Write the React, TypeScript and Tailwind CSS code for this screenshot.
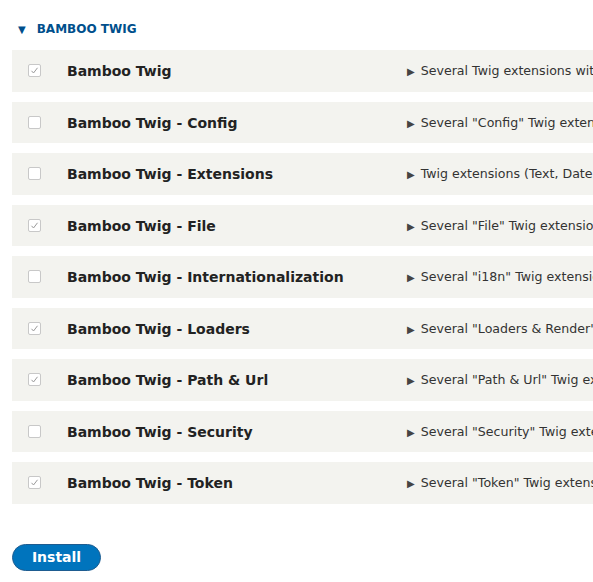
import type React from "react"

interface Module {
  name: string
  description: string
  checked: boolean
}

const modules: Module[] = [
  { name: "Bamboo Twig", description: "Several Twig extensions with a strong focus on performance.", checked: true },
  { name: "Bamboo Twig - Config", description: "Several \"Config\" Twig extensions, like config values & settings.", checked: false },
  { name: "Bamboo Twig - Extensions", description: "Twig extensions (Text, Date, Array, Intl) of the Twig project.", checked: false },
  { name: "Bamboo Twig - File", description: "Several \"File\" Twig extensions, like url & extension of files.", checked: true },
  { name: "Bamboo Twig - Internationalization", description: "Several \"i18n\" Twig extensions, like date & price format.", checked: false },
  { name: "Bamboo Twig - Loaders", description: "Several \"Loaders & Render\" Twig extensions for entities.", checked: true },
  { name: "Bamboo Twig - Path & Url", description: "Several \"Path & Url\" Twig extensions, like theme & file paths.", checked: true },
  { name: "Bamboo Twig - Security", description: "Several \"Security\" Twig extensions, like user & role access.", checked: false },
  { name: "Bamboo Twig - Token", description: "Several \"Token\" Twig extensions, like token replacement.", checked: true },
]

const Checkbox: React.FC<{ checked: boolean }> = ({ checked }) => (
  <span className="flex h-[13px] w-[13px] items-center justify-center rounded-[2px] border border-[#c8c8c8] bg-white">
    {checked && (
      <svg width="9" height="9" viewBox="0 0 9 9" fill="none">
        <path d="M1.5 4.8 L3.5 7 L7.5 1.8" stroke="#9a9a9a" strokeWidth="1" />
      </svg>
    )}
  </span>
)

export default function App() {
  return (
    <div className="min-h-screen overflow-hidden bg-white pl-3 pt-[21px] font-['DejaVu_Sans',sans-serif] text-[#222]">
      <div className="flex items-center pl-[6px]">
        <span className="text-[10px] text-[#004f8c]">▼</span>
        <span className="ml-[11px] text-[12px] font-bold uppercase leading-4 text-[#004f8c]">Bamboo Twig</span>
      </div>

      <div className="mt-[13px] flex w-[900px] flex-col gap-[10px]">
        {modules.map((m) => (
          <div key={m.name} className="flex h-[41.5px] items-center bg-[#f3f3ef] whitespace-nowrap">
            <div className="w-[55px] pl-4">
              <Checkbox checked={m.checked} />
            </div>
            <div className="w-[340px] pt-[2px] text-[14px] font-bold">{m.name}</div>
            <div className="flex items-center pt-[2px] text-[12.6px] text-[#333]">
              <span className="mr-[6px] text-[10px] text-[#444]">▶</span>
              {m.description}
            </div>
          </div>
        ))}
      </div>

      <button className="mt-[40px] h-[27px] w-[89px] rounded-full border border-[#1e5c90] bg-[#0074bd] text-[14px] font-bold text-white">
        Install
      </button>
    </div>
  )
}
